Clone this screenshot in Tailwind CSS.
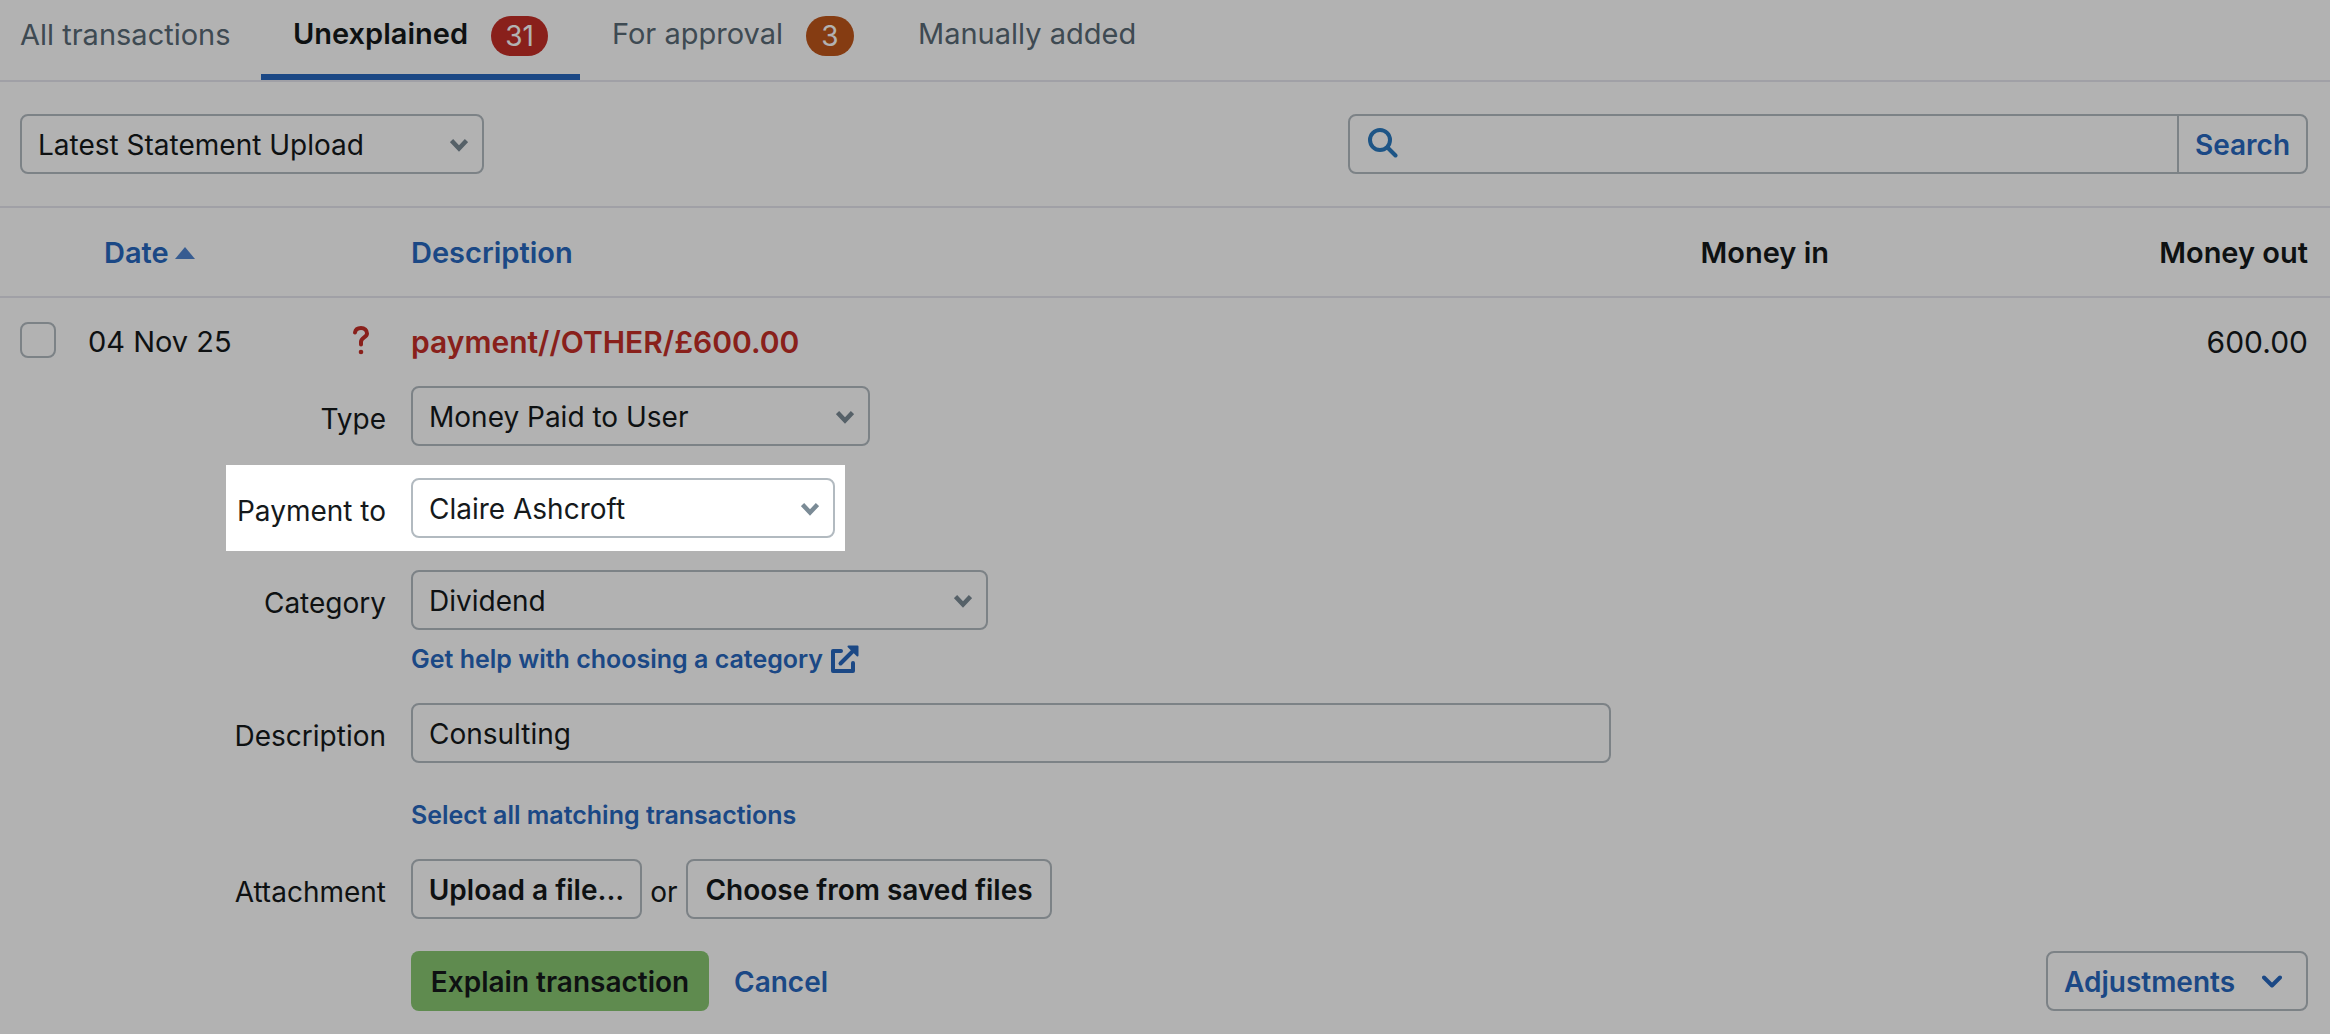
<!DOCTYPE html>
<html lang="en">
<head>
  <meta charset="UTF-8">
  <title>Bank transactions</title>
  <script src="https://cdn.jsdelivr.net/npm/@tailwindcss/browser@4"></script>
</head>
<body class="bg-white min-h-screen overflow-x-hidden font-['Inter','Liberation_Sans',sans-serif] text-[28px] leading-9 text-[#15191b]">

<!-- Tabs -->
<nav class="flex h-[82px] border-b-2 border-[#e6e6ee] text-[29px] text-[#5a6a76]">
  <a href="#" class="px-5 pt-[17px] w-[261px] whitespace-nowrap">All transactions</a>
  <a href="#" class="flex justify-between w-[319px] px-8 pt-4 border-b-6 border-[#2868bf] font-semibold text-[#15191b]">
    <span>Unexplained</span>
    <span class="h-10 px-[14px] leading-10 rounded-[20px] bg-[#c52e27] text-white text-[28px] font-normal">31</span>
  </a>
  <a href="#" class="flex justify-between w-[306px] px-8 pt-4">
    <span>For approval</span>
    <span class="w-12 h-10 text-center leading-10 rounded-[20px] bg-[#bf561b] text-white text-[28px]">3</span>
  </a>
  <a href="#" class="px-8 pt-4">Manually added</a>
</nav>

<!-- Filter and search -->
<div class="flex justify-between pl-5 py-8 pr-[22px] border-b-2 border-[#e6e6ee]">
  <div class="relative w-[464px]">
    <select aria-label="Statement" class="appearance-none w-full h-15 pt-[2px] pl-4 pr-12 border-2 border-[#b2bac0] rounded-lg bg-white">
      <option>Latest Statement Upload</option>
    </select>
    <svg class="absolute right-4 top-6 w-[18px] h-[14px] pointer-events-none" viewBox="0 0 18 14" fill="none" stroke="#7b8b96" stroke-width="4.500"><path d="M1.500 2.500 9 10.500l7.500-8"/></svg>
  </div>
  <form class="flex w-[960px] h-15 border-2 border-[#b2bac0] rounded-lg overflow-hidden">
    <label for="search" class="pl-4 pt-[10px]">
      <svg class="w-8 h-8" viewBox="0 0 32 32" fill="none" stroke="#2a7ac0" stroke-width="4" stroke-linecap="round"><circle cx="14" cy="14" r="10"/><path d="m21.500 21.500 8 8"/></svg>
    </label>
    <input id="search" type="text" aria-label="Search transactions" class="flex-1 px-3 outline-none">
    <button type="button" class="w-[129px] pt-[2px] border-l-2 border-[#b2bac0] text-[#2868bf] font-semibold">Search</button>
  </form>
</div>

<!-- Transactions -->
<table class="w-full table-fixed">
  <colgroup>
    <col class="w-[88px]">
    <col class="w-[250px]">
    <col class="w-[73px]">
    <col>
    <col class="w-[480px]">
    <col class="w-[501px]">
  </colgroup>
  <thead>
    <tr class="h-[90px] text-[29px] shadow-[inset_0_-2px_0_#e6e6ee]">
      <th></th>
      <th class="text-left pl-4"><a href="#" class="inline-flex items-center gap-[6px] text-[#2868bf] font-semibold">Date
        <svg class="w-5 h-3" viewBox="0 0 20 12" fill="#5085d0"><path d="M10 0 20 12H0z"/></svg></a></th>
      <th></th>
      <th class="text-left"><a href="#" class="text-[#2868bf] font-semibold">Description</a></th>
      <th class="text-right font-semibold">Money in</th>
      <th class="text-right font-semibold pr-[22px]">Money out</th>
    </tr>
  </thead>
  <tbody>
    <tr class="h-[88px] text-[30px]">
      <td class="pl-5"><input type="checkbox" aria-label="Select transaction" class="block appearance-none w-9 h-9 mb-1 border-2 border-[#b2bac0] rounded-lg bg-white"></td>
      <td class="text-[29px]">04 Nov 25</td>
      <td class="pl-[14px]">
        <svg class="w-[18px] h-[30px] mb-1" viewBox="0 0 18 30" fill="none" stroke="#c52e27" stroke-width="4" stroke-linecap="round"><path d="M3 7.500C3.500 4.500 6 3 9 3c3.500 0 6 2 6 5.500 0 4-6 4-6 8.500v2.500"/><circle cx="9" cy="27" r="2.300" fill="#c52e27" stroke="none"/></svg>
      </td>
      <td class="font-semibold text-[#c52e27]">payment//OTHER/£600.00</td>
      <td></td>
      <td class="text-right pr-[22px]">600.00</td>
    </tr>
    <tr>
      <td colspan="6">
        <form class="flex flex-col">
          <div class="flex items-center gap-[25px] pl-[226px]">
            <label for="type" class="w-40 pt-[6px] text-right">Type</label>
            <div class="relative w-[459px]">
              <select id="type" class="appearance-none w-full h-15 pt-[2px] pl-4 pr-12 border-2 border-[#b2bac0] rounded-lg bg-white">
                <option>Money Paid to User</option>
              </select>
              <svg class="absolute right-4 top-6 w-[18px] h-[14px] pointer-events-none" viewBox="0 0 18 14" fill="none" stroke="#7b8b96" stroke-width="4.500"><path d="M1.500 2.500 9 10.500l7.500-8"/></svg>
            </div>
          </div>

          <!-- Highlighted step, everything around it is dimmed -->
          <div class="relative z-10 flex items-center gap-[25px] w-[619px] my-[19px] ml-[226px] py-[13px] shadow-[0_0_0_9999px_rgba(0,0,0,0.3)]">
            <label for="payment-to" class="w-40 pt-[6px] text-right whitespace-nowrap">Payment to</label>
            <div class="relative w-[424px]">
              <select id="payment-to" class="appearance-none w-full h-15 pt-[2px] pl-4 pr-12 border-2 border-[#b2bac0] rounded-lg bg-white">
                <option>Claire Ashcroft</option>
              </select>
              <svg class="absolute right-4 top-6 w-[18px] h-[14px] pointer-events-none" viewBox="0 0 18 14" fill="none" stroke="#7b8b96" stroke-width="4.500"><path d="M1.500 2.500 9 10.500l7.500-8"/></svg>
            </div>
          </div>

          <div class="flex items-center gap-[25px] pl-[226px]">
            <label for="category" class="w-40 pt-[6px] text-right">Category</label>
            <div class="relative w-[577px]">
              <select id="category" class="appearance-none w-full h-15 pt-[2px] pl-4 pr-12 border-2 border-[#b2bac0] rounded-lg bg-white">
                <option>Dividend</option>
              </select>
              <svg class="absolute right-4 top-6 w-[18px] h-[14px] pointer-events-none" viewBox="0 0 18 14" fill="none" stroke="#7b8b96" stroke-width="4.500"><path d="M1.500 2.500 9 10.500l7.500-8"/></svg>
            </div>
          </div>
          <a href="#" class="flex items-center gap-2 w-fit mt-[11px] ml-[411px] text-[25px] leading-9 font-semibold text-[#2868bf]">
            Get help with choosing a category
            <svg class="w-7 h-7" viewBox="0 0 28 28" fill="none" stroke="#2868bf" stroke-width="4" stroke-linejoin="round" stroke-linecap="round"><path d="M10 6H2v20h20v-8"/><path d="M9.500 18.500 24 4"/><path d="M17.500 1.500h9v9z" fill="#2868bf" stroke-width="2"/></svg>
          </a>

          <div class="flex items-center gap-[25px] mt-[26px] pl-[226px]">
            <label for="description" class="w-40 pt-[6px] text-right">Description</label>
            <input id="description" type="text" value="Consulting" class="w-[1200px] h-15 pt-[2px] px-4 border-2 border-[#b2bac0] rounded-lg bg-white">
          </div>
          <a href="#" class="w-fit mt-[34px] ml-[411px] text-[25px] leading-9 font-semibold text-[#2868bf]">Select all matching transactions</a>

          <div class="flex items-center mt-[26px] pl-[226px]">
            <span class="w-40 mr-[25px] pt-[6px] text-right whitespace-nowrap">Attachment</span>
            <button type="button" class="w-[231px] h-15 pt-[2px] border-2 border-[#b2bac0] rounded-lg font-semibold whitespace-nowrap">Upload a file...</button>
            <span class="w-[44px] pt-[6px] text-center">or</span>
            <button type="button" class="w-[366px] h-15 pt-[2px] border-2 border-[#b2bac0] rounded-lg font-semibold whitespace-nowrap">Choose from saved files</button>
          </div>

          <div class="flex items-center mt-8 pl-[411px] pr-[22px]">
            <button type="button" class="w-[298px] h-15 pt-[2px] rounded-lg bg-[#88c872] font-semibold whitespace-nowrap">Explain transaction</button>
            <a href="#" class="ml-[25px] pt-[2px] font-semibold text-[#2868bf]">Cancel</a>
            <button type="button" class="flex items-center justify-between w-[262px] h-15 ml-auto pt-[2px] pl-4 pr-6 border-2 border-[#b2bac0] rounded-lg font-semibold text-[#2868bf]">Adjustments
              <svg class="w-5 h-[14px]" viewBox="0 0 20 14" fill="none" stroke="#2868bf" stroke-width="4" stroke-linecap="round" stroke-linejoin="round"><path d="m2 2.500 8 8 8-8"/></svg>
            </button>
          </div>
        </form>
      </td>
    </tr>
  </tbody>
</table>
</body>
</html>
